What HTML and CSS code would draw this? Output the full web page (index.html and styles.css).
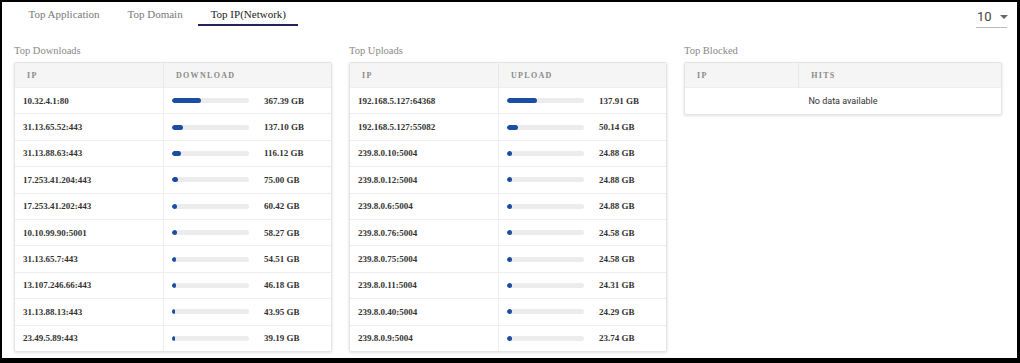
FILE: index.html
```html
<!DOCTYPE html>
<html lang="en">
<head>
    <meta charset="UTF-8">
    <meta name="viewport" content="width=device-width, initial-scale=1.0">
    <title>Top IP (Network)</title>
    <link rel="stylesheet" href="styles.css">
</head>
<body>
    <div class="frame">
        <div class="topbar">
            <nav class="tabs">
                <a class="tab">Top Application</a>
                <a class="tab">Top Domain</a>
                <a class="tab active">Top IP(Network)</a>
            </nav>
            <div class="limit">
                <span>10</span>
                <span class="caret"></span>
            </div>
        </div>

        <div class="panels">
            <section class="panel">
                <h2 class="panel-title">Top Downloads</h2>
                <div class="card">
                    <table class="stats">
                        <thead>
                            <tr><th class="col-ip">IP</th><th>DOWNLOAD</th></tr>
                        </thead>
                        <tbody id="downloads-body"></tbody>
                    </table>
                </div>
            </section>
            <section class="panel">
                <h2 class="panel-title">Top Uploads</h2>
                <div class="card">
                    <table class="stats">
                        <thead>
                            <tr><th class="col-ip">IP</th><th>UPLOAD</th></tr>
                        </thead>
                        <tbody id="uploads-body"></tbody>
                    </table>
                </div>
            </section>
            <section class="panel">
                <h2 class="panel-title">Top Blocked</h2>
                <div class="card">
                    <table class="stats blocked">
                        <thead>
                            <tr><th class="col-ip">IP</th><th>HITS</th></tr>
                        </thead>
                        <tbody>
                            <tr><td colspan="2" class="empty">No data available</td></tr>
                        </tbody>
                    </table>
                </div>
            </section>
        </div>
    </div>

    <script>
        // Traffic per IP, in GB
        const downloads = [
            ["10.32.4.1:80", 367.39],
            ["31.13.65.52:443", 137.10],
            ["31.13.88.63:443", 116.12],
            ["17.253.41.204:443", 75.00],
            ["17.253.41.202:443", 60.42],
            ["10.10.99.90:5001", 58.27],
            ["31.13.65.7:443", 54.51],
            ["13.107.246.66:443", 46.18],
            ["31.13.88.13:443", 43.95],
            ["23.49.5.89:443", 39.19]
        ];

        const uploads = [
            ["192.168.5.127:64368", 137.91],
            ["192.168.5.127:55082", 50.14],
            ["239.8.0.10:5004", 24.88],
            ["239.8.0.12:5004", 24.88],
            ["239.8.0.6:5004", 24.88],
            ["239.8.0.76:5004", 24.58],
            ["239.8.0.75:5004", 24.58],
            ["239.8.0.11:5004", 24.31],
            ["239.8.0.40:5004", 24.29],
            ["239.8.0.9:5004", 23.74]
        ];

        function fillTable(id, rows, total) {
            const body = document.getElementById(id);
            rows.forEach(([ip, gb]) => {
                const tr = document.createElement("tr");
                const pct = Math.max(gb / total * 100, 4);
                tr.innerHTML =
                    '<td class="col-ip">' + ip + '</td>' +
                    '<td><div class="usage">' +
                    '<div class="bar"><div class="fill" style="width:' + pct.toFixed(1) + '%"></div></div>' +
                    '<span class="amount">' + gb.toFixed(2) + ' GB</span>' +
                    '</div></td>';
                body.appendChild(tr);
            });
        }

        fillTable("downloads-body", downloads, 967);
        fillTable("uploads-body", uploads, 354);
    </script>
</body>
</html>
```

FILE: styles.css
```css
body {
    margin: 0;
    padding: 0;
    font-family: "Liberation Serif", "Times New Roman", serif;
    color: #333;
    background-color: #fff;
}

.frame {
    box-sizing: border-box;
    width: 1020px;
    height: 363px;
    border: 2px solid #000;
    border-right-width: 3px;
    border-bottom-width: 5px;
    overflow: hidden;
}

/* Tabs + page size */

.topbar {
    display: flex;
    justify-content: space-between;
    align-items: flex-start;
    padding: 0 10px 0 14px;
}

.tabs {
    display: flex;
    gap: 3px;
}

.tab {
    display: block;
    padding: 0 12.5px;
    height: 22px;
    line-height: 24px;
    font-size: 11px;
    color: #777;
    border-bottom: 2px solid transparent;
}

.tab.active {
    color: #222;
    border-bottom-color: #23215c;
}

.limit {
    display: flex;
    align-items: center;
    gap: 8px;
    margin-top: 6px;
    width: 31px;
    height: 20px;
    padding-left: 1px;
    border-bottom: 1px solid #bbb;
    font-family: Roboto, "Liberation Sans", sans-serif;
    font-size: 13px;
    color: #444;
    box-sizing: border-box;
    padding-bottom: 2px;
}

.caret {
    width: 0;
    height: 0;
    border-left: 4px solid transparent;
    border-right: 4px solid transparent;
    border-top: 4px solid #666;
}

/* Panels */

.panels {
    display: grid;
    grid-template-columns: repeat(3, 318px);
    gap: 17px;
    padding-left: 12px;
    margin-top: 16px;
}

.panel-title {
    margin: 0 0 5px;
    font-size: 10.5px;
    font-weight: normal;
    color: #888;
    line-height: 13px;
}

.card {
    border: 1px solid #e4e4e4;
    border-radius: 2px;
    box-shadow: 0 1px 3px rgba(0, 0, 0, 0.12);
    background-color: #fff;
}

.stats {
    width: 100%;
    border-collapse: collapse;
}

.stats th {
    height: 24px;
    padding: 0 12px;
    background-color: #f5f5f5;
    text-align: left;
    font-size: 8px;
    font-weight: bold;
    letter-spacing: 1.3px;
    color: #8a8a8a;
    border-right: 1px solid #e8e8e8;
}

.stats th:last-child,
.stats td:last-child {
    border-right: none;
}

.stats td {
    height: 25.4px;
    padding: 0 8px;
    font-size: 9px;
    font-weight: bold;
    color: #333;
    border-top: 1px solid #eee;
    border-right: 1px solid #eee;
}

.stats .col-ip {
    width: 47%;
}

.blocked .col-ip {
    width: 36%;
}

.usage {
    display: flex;
    align-items: center;
}

.bar {
    width: 77px;
    height: 5px;
    border-radius: 3px;
    background-color: #ececec;
    overflow: hidden;
}

.fill {
    height: 100%;
    border-radius: 3px;
    background-color: #1b4ea3;
}

.amount {
    margin-left: 15px;
}

.stats td.empty {
    height: 26px;
    text-align: center;
    font-family: Roboto, "Liberation Sans", sans-serif;
    font-weight: normal;
    font-size: 9px;
    color: #333;
}
```
